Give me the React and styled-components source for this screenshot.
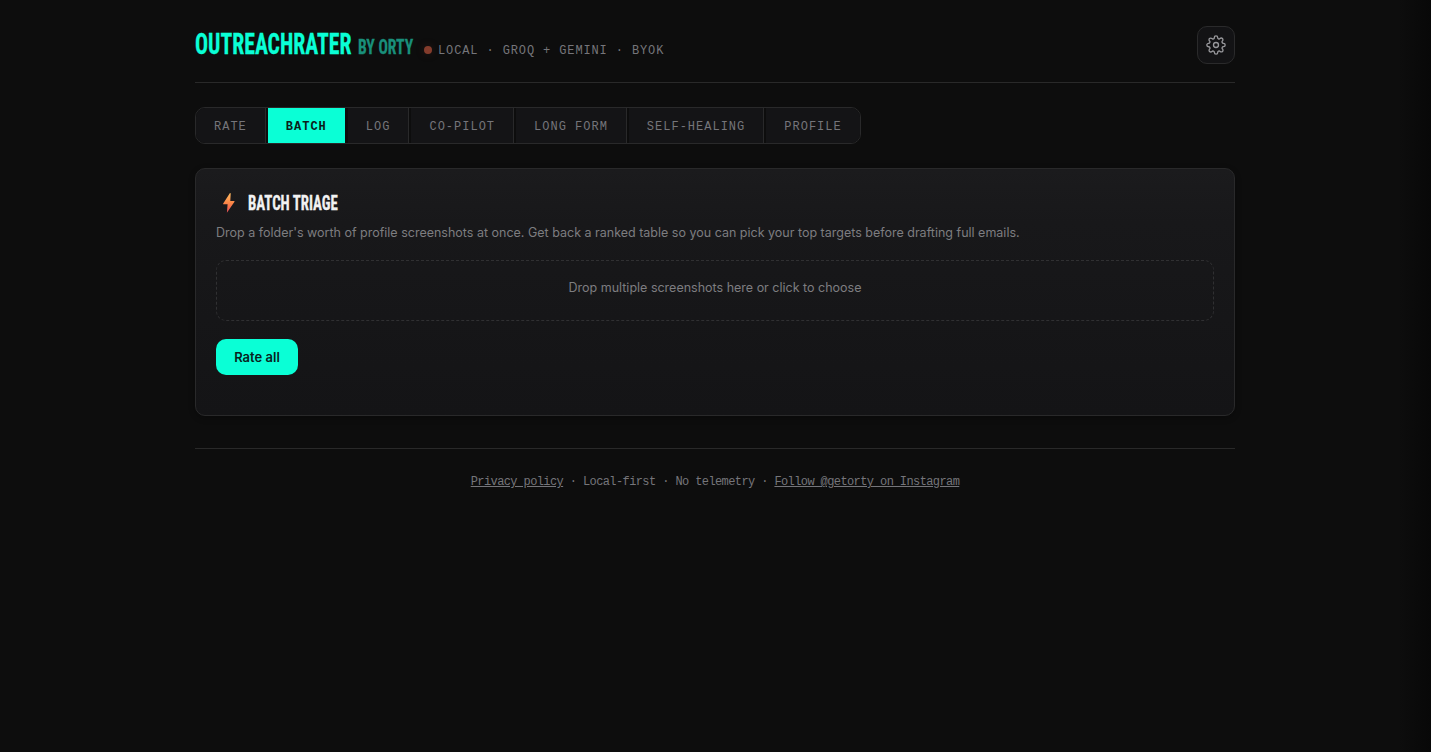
import React from "react";
import styled, { createGlobalStyle } from "styled-components";
import { FiSettings } from "react-icons/fi";

const GlobalStyle = createGlobalStyle`
  * { box-sizing: border-box; }
  body {
    margin: 0;
    min-height: 100vh;
    background: linear-gradient(90deg, #0d0d0d calc(100% - 32px), #080808 100%) #0d0d0d;
    color: #f2f2f2;
    font-family: Inter, sans-serif;
    font-size: 13px;
  }
`;

const mono = `"Liberation Mono", monospace`;

const Page = styled.main`
  width: 1040px;
  margin: 0 auto;
  padding-top: 26px;
  position: relative;
  left: -0.5px;
`;

const Header = styled.header`
  display: flex;
  justify-content: space-between;
  height: 57px;
  border-bottom: 1px solid #292929;
`;

const Brand = styled.div`
  display: flex;
  align-items: baseline;
  height: 38px;
  line-height: 37px;
`;

const Condensed = styled.span`
  display: block;
  width: ${(p) => p.$width}px;
  margin-right: ${(p) => p.$after || 0}px;
  font-family: Roboto, sans-serif;
  font-stretch: 75%;
  font-weight: 700;
  font-size: ${(p) => p.$size}px;
  color: ${(p) => p.$color};
  white-space: nowrap;
  -webkit-text-stroke: 0.3px currentColor;

  > span {
    display: inline-block;
    transform: scaleX(${(p) => p.$scale});
    transform-origin: left;
  }
`;

const Dot = styled.i`
  align-self: center;
  width: 8px;
  height: 8px;
  margin: 10px 6px 0 0;
  border-radius: 50%;
  background: #843c2c;
  box-shadow: 0 0 8px rgba(132, 60, 44, 0.25);
`;

const Tagline = styled.span`
  font-family: ${mono};
  font-size: 12px;
  letter-spacing: 0.88px;
  color: #75757a;
  white-space: pre;
`;

const IconButton = styled.button`
  display: grid;
  place-items: center;
  width: 38px;
  height: 38px;
  padding: 0;
  border: 1px solid #2a2a2b;
  border-radius: 10px;
  background: #131315;
  color: #98989c;
`;

const Tabs = styled.nav`
  display: flex;
  gap: 2px;
  width: max-content;
  height: 37px;
  margin-top: 24px;
  border: 1px solid #29292a;
  border-radius: 10px;
  overflow: hidden;
`;

const Tab = styled.button`
  padding: 2px 18px 0;
  border: 0;
  border-right: 1px solid ${(p) => (p.$active ? "#0d0d0d" : "#29292a")};
  background: ${(p) => (p.$active ? "#0affd6" : "#141416")};
  color: ${(p) => (p.$active ? "#0b1d19" : "#75757a")};
  font-family: ${mono};
  font-size: 12px;
  font-weight: ${(p) => (p.$active ? 700 : 400)};
  letter-spacing: 1px;

  &:last-child { border-right: 0; }
`;

const Card = styled.section`
  height: 248px;
  margin-top: 24px;
  padding: 20px;
  border: 1px solid #29292a;
  border-radius: 10px;
  background: linear-gradient(180deg, #1b1b1d 0%, #18181a 22%, #141416 100%);
  box-shadow: 0 2px 6px rgba(0, 0, 0, 0.3);
`;

const Title = styled.h2`
  display: flex;
  align-items: center;
  height: 28px;
  margin: 0;
  line-height: 30px;

  svg { margin: 0 10.5px 0 6px; }
`;

const Description = styled.p`
  margin: 6px 0 0;
  height: 20px;
  font-size: 12.5px;
  line-height: 20px;
  color: #7d7d80;
`;

const DropZone = styled.div`
  height: 61px;
  margin-top: 17px;
  padding-top: 17px;
  border: 1px dashed #303032;
  border-radius: 10px;
  color: #7d7d80;
  font-size: 12.5px;
  line-height: 20px;
  text-align: center;
`;

const PrimaryButton = styled.button`
  width: 82px;
  height: 36px;
  margin-top: 18px;
  padding: 0;
  border: 0;
  border-radius: 10px;
  background: #0affd6;
  color: #08231e;
  font: 600 13px Inter, sans-serif;
`;

const Footer = styled.footer`
  margin-top: 32px;
  padding-top: 24px;
  border-top: 1px solid #292929;
  color: #75757a;
  font-family: ${mono};
  font-size: 12px;
  letter-spacing: -0.6px;
  line-height: 18px;
  text-align: center;

  a { color: inherit; text-decoration: underline; }
`;

const Bolt = () => (
  <svg width="15" height="20" viewBox="0 0 15 20" aria-hidden="true">
    <defs>
      <linearGradient id="bolt" x1="0" y1="0" x2="0" y2="1">
        <stop offset="0" stopColor="#ffbd62" />
        <stop offset="0.5" stopColor="#fb8747" />
        <stop offset="1" stopColor="#e94d57" />
      </linearGradient>
    </defs>
    <path d="M7.8 0.2 1.2 10.6c-.2.4 0 .7.4.7h4L4.9 19.7l7.6-11c.2-.4 0-.8-.4-.8H8.3L8.7.6c0-.5-.6-.8-.9-.4Z" fill="url(#bolt)" />
  </svg>
);

const tabs = ["RATE", "BATCH", "LOG", "CO-PILOT", "LONG FORM", "SELF-HEALING", "PROFILE"];

export default function App() {
  return (
    <>
      <GlobalStyle />
      <Page>
        <Header>
          <Brand>
            <Condensed $width={157} $after={6} $size={29} $scale={0.748} $color="#0affd6"><span>OUTREACHRATER</span></Condensed>
            <Condensed $width={55} $after={11} $size={20} $scale={0.78} $color="#198f7b"><span>BY ORTY</span></Condensed>
            <Dot />
            <Tagline>LOCAL · GROQ + GEMINI · BYOK</Tagline>
          </Brand>
          <IconButton aria-label="Settings"><FiSettings size={20} strokeWidth={1.6} /></IconButton>
        </Header>
        <Tabs>
          {tabs.map((name) => <Tab key={name} $active={name === "BATCH"}>{name}</Tab>)}
        </Tabs>
        <Card>
          <Title>
            <Bolt />
            <Condensed $width={90} $size={20} $scale={0.742} $color="#f2f2f2"><span>BATCH TRIAGE</span></Condensed>
          </Title>
          <Description>Drop a folder's worth of profile screenshots at once. Get back a ranked table so you can pick your top targets before drafting full emails.</Description>
          <DropZone>Drop multiple screenshots here or click to choose</DropZone>
          <PrimaryButton>Rate all</PrimaryButton>
        </Card>
        <Footer>
          <a>Privacy policy</a> · Local-first · No telemetry · <a>Follow @getorty on Instagram</a>
        </Footer>
      </Page>
    </>
  );
}
